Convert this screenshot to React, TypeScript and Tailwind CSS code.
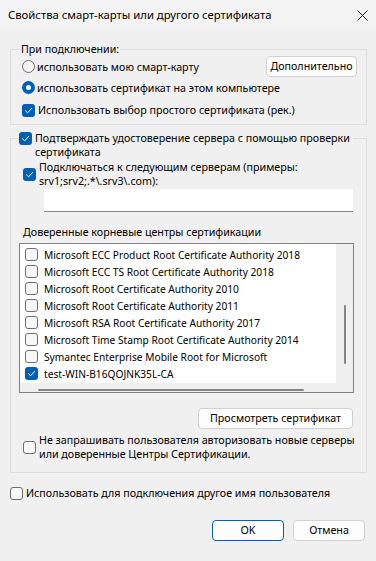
import * as React from "react";

const certs: { name: string; checked: boolean }[] = [
  { name: "Microsoft ECC Product Root Certificate Authority 2018", checked: false },
  { name: "Microsoft ECC TS Root Certificate Authority 2018", checked: false },
  { name: "Microsoft Root Certificate Authority 2010", checked: false },
  { name: "Microsoft Root Certificate Authority 2011", checked: false },
  { name: "Microsoft RSA Root Certificate Authority 2017", checked: false },
  { name: "Microsoft Time Stamp Root Certificate Authority 2014", checked: false },
  { name: "Symantec Enterprise Mobile Root for Microsoft", checked: false },
  { name: "test-WIN-B16QOJNK35L-CA", checked: true },
];

function Check({ checked }: { checked?: boolean }) {
  if (checked) {
    return (
      <span className="flex h-[13px] w-[13px] shrink-0 items-center justify-center rounded-[3px] bg-[#005fb8]">
        <svg width="9" height="9" viewBox="0 0 9 9" fill="none">
          <path d="M1.5 4.8 L3.6 6.8 L7.6 2.4" stroke="white" strokeWidth="1" strokeLinecap="round" strokeLinejoin="round" />
        </svg>
      </span>
    );
  }
  return <span className="h-[13px] w-[13px] shrink-0 rounded-[3px] border border-[#6e6e6e] bg-[#f7f7f7]" />;
}

function Radio({ checked }: { checked?: boolean }) {
  if (checked) {
    return (
      <span className="flex h-[13px] w-[13px] shrink-0 items-center justify-center rounded-full bg-[#005fb8]">
        <span className="h-[5px] w-[5px] rounded-full bg-white" />
      </span>
    );
  }
  return <span className="h-[13px] w-[13px] shrink-0 rounded-full border border-[#6e6e6e] bg-[#f7f7f7]" />;
}

function Btn({ children, className = "", primary }: { children: React.ReactNode; className?: string; primary?: boolean }) {
  return (
    <button
      className={
        "flex h-[21px] items-center justify-center rounded-[4px] border bg-[#fdfdfd] leading-none " +
        (primary ? "border-[#005fb8] " : "border-[#d0d0d0] ") +
        className
      }
    >
      {children}
    </button>
  );
}

export default function App() {
  return (
    <div className="h-[561px] w-[376px] overflow-hidden bg-[#f0f0f0] font-['Segoe_UI','Noto_Sans',sans-serif] text-[10.7px] leading-[14px] text-black">
      {/* title bar */}
      <div className="flex h-[30px] items-center justify-between bg-[#f3f3f3] pl-[8px] pr-[8px]">
        <span className="text-[11.3px]">Свойства смарт-карты или другого сертификата</span>
        <svg width="11" height="11" viewBox="0 0 11 11">
          <path d="M0.5 0.5 L10.5 10.5 M10.5 0.5 L0.5 10.5" stroke="#1a1a1a" strokeWidth="1" />
        </svg>
      </div>

      <div className="px-[10px]">
        {/* group 1 */}
        <fieldset className="mt-[12px] w-[357px] border border-[#dcdcdc] pb-[5px] pl-[11px] pr-[9px]">
          <legend className="ml-[-2px] px-[1px] leading-[14px]">При подключении:</legend>
          <div className="mt-[-1px] flex h-[23px] items-center justify-between">
            <label className="flex items-center gap-[2px]">
              <Radio />
              <span>использовать мою смарт-карту</span>
            </label>
            <Btn className="w-[91px]">Дополнительно</Btn>
          </div>
          <label className="flex h-[19px] items-center gap-[2px]">
            <Radio checked />
            <span>использовать сертификат на этом компьютере</span>
          </label>
          <label className="mt-[4px] flex h-[18px] items-center gap-[3px]">
            <Check checked />
            <span>Использовать выбор простого сертификата (рек.)</span>
          </label>
        </fieldset>

        {/* group 2 */}
        <fieldset className="mt-[6px] w-[357px] border border-[#dcdcdc] pb-[11px] pl-[12px]">
          <legend className="ml-[-5px] h-[14px] px-[1px] pr-[3px]">
            <span className="flex items-start gap-[3px]">
              <span className="pt-[1px]">
                <Check checked />
              </span>
              <span className="whitespace-nowrap">
                Подтверждать удостоверение сервера с помощью проверки
                <br />
                сертификата
              </span>
            </span>
          </legend>

          <label className="mt-[15px] flex items-center gap-[3px]">
            <Check checked />
            <span className="whitespace-nowrap">
              Подключаться к следующим серверам (примеры:
              <br />
              srv1;srv2;.*\.srv3\.com):
            </span>
          </label>
          <div className="ml-[21px] mt-[1px] h-[23px] w-[309px] border-b border-[#868686] bg-white" />

          <div className="mt-[13px]">Доверенные корневые центры сертификации</div>

          {/* list box */}
          <div className="ml-[-4px] mt-[4px] w-[335px] border border-[#828282]">
            <div className="flex">
              <div className="flex h-[139px] w-[316px] flex-col overflow-hidden bg-white pl-[5px] pt-[2px] text-[10.2px]">
                {certs.map((c) => (
                  <div key={c.name} className="flex h-[17px] items-center gap-[6px] whitespace-nowrap">
                    <Check checked={c.checked} />
                    <span>{c.name}</span>
                  </div>
                ))}
              </div>
              <div className="flex w-[17px] justify-center bg-[#f0f0f0] pt-[61px]">
                <div className="h-[59px] w-[2px] rounded-full bg-[#858585]" />
              </div>
            </div>
            <div className="h-[9px] bg-[#f0f0f0] pt-[6px]">
              <div className="ml-[18px] h-[2px] w-[266px] rounded-full bg-[#858585]" />
            </div>
          </div>

          <div className="mt-[15px] flex justify-end pr-[13px]">
            <Btn className="w-[155px]">Просмотреть сертификат</Btn>
          </div>

          <label className="mt-[4px] flex items-center gap-[3px]">
            <Check />
            <span className="whitespace-nowrap">
              Не запрашивать пользователя авторизовать новые серверы
              <br />
              или доверенные Центры Сертификации.
            </span>
          </label>
        </fieldset>

        <label className="mt-[13px] flex h-[14px] items-center gap-[3px]">
          <Check />
          <span className="whitespace-nowrap">Использовать для подключения другое имя пользователя</span>
        </label>

        <div className="mt-[20px] flex justify-end gap-[9px] pr-[1px]">
          <Btn primary className="w-[72px]">
            OK
          </Btn>
          <Btn className="w-[72px]">Отмена</Btn>
        </div>
      </div>
    </div>
  );
}
